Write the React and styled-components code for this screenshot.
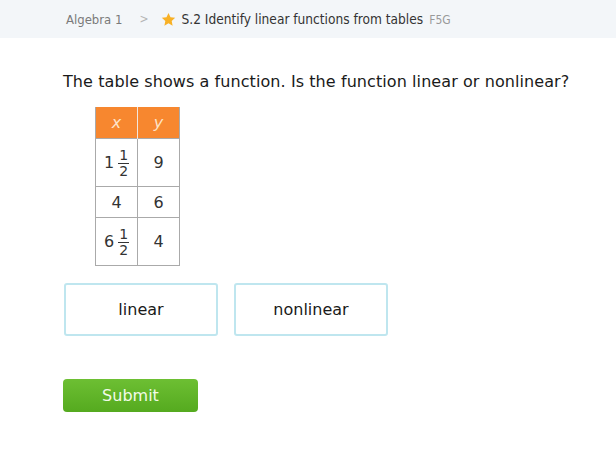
import styled, { createGlobalStyle } from 'styled-components';

const GlobalStyle = createGlobalStyle`
  body {
    margin: 0;
    background: #ffffff;
    font-family: "DejaVu Sans", Verdana, sans-serif;
    color: #222;
  }
`;

const Breadcrumb = styled.div`
  align-items: center;
  background-color: #f3f6f9;
  display: flex;
  height: 38px;
  padding-left: 66px;
  font-family: "DejaVu Sans Condensed", "DejaVu Sans", sans-serif;
  font-size: 13px;
`;

const Crumb = styled.span`
  color: #7a7a7a;
`;

const Chevron = styled.span`
  color: #b5b5b5;
  margin: 0 13px 0 17px;
  font-size: 12px;
`;

const Skill = styled.span`
  color: #333;
  margin-left: 5px;
  font-size: 13.6px;
`;

const Code = styled.span`
  color: #999;
  font-size: 12px;
  margin-left: 6px;
  margin-top: 2px;
`;

const Main = styled.div`
  padding: 34px 0 0 63px;
`;

const Question = styled.p`
  font-size: 16px;
  letter-spacing: 0.08px;
  margin: 0 0 16px;
  color: #1a1a1a;
`;

const Table = styled.table`
  border-collapse: collapse;
  margin-left: 32px;
  font-size: 16px;
`;

const Head = styled.th`
  background-color: #f7872f;
  color: #fde3c8;
  font-style: italic;
  font-weight: normal;
  height: 31px;
  width: 41px;
  padding: 0;
  border-left: 1px solid #f2e6dc;
  &:first-child {
    border-left: 1px solid #aaa;
  }
  &:last-child {
    border-right: 1px solid #aaa;
  }
`;

const Cell = styled.td`
  border: 1px solid #aaa;
  height: ${p => (p.$tall ? 47 : 30)}px;
  padding: 0;
  text-align: center;
  color: #333;
`;

const Mixed = styled.span`
  align-items: center;
  display: inline-flex;
  gap: 4px;
`;

const Frac = styled.span`
  display: inline-flex;
  flex-direction: column;
  align-items: center;
  font-size: 14px;
  line-height: 14px;
`;

const Num = styled.span`
  border-bottom: 1px solid #333;
  padding: 0 1px 1px;
`;

const Choices = styled.div`
  display: flex;
  gap: 16px;
  margin-top: 17px;
  margin-left: 1px;
`;

const Choice = styled.button`
  background: #fff;
  border: 2px solid #bfe6ef;
  border-radius: 3px;
  color: #1a1a1a;
  font-family: "DejaVu Sans", Verdana, sans-serif;
  font-size: 16px;
  height: 53px;
  width: 154px;
  cursor: pointer;
`;

const Submit = styled.button`
  display: block;
  background: linear-gradient(#6dbf33, #55aa1f);
  border: none;
  border-radius: 4px;
  color: #f2fbe9;
  font-family: "DejaVu Sans", Verdana, sans-serif;
  font-size: 16px;
  height: 33px;
  width: 135px;
  margin-top: 43px;
`;

const Star = () => (
  <svg width="15" height="15" viewBox="0 0 24 24">
    <path
      d="M12 1.5l3.2 6.9 7.5.9-5.6 5.1 1.5 7.4L12 18l-6.6 3.8 1.5-7.4-5.6-5.1 7.5-.9z"
      fill="#f8b126"
    />
  </svg>
);

const MixedNumber = ({ whole, n, d }) => (
  <Mixed>
    {whole}
    <Frac>
      <Num>{n}</Num>
      <span>{d}</span>
    </Frac>
  </Mixed>
);

const rows = [
  { x: <MixedNumber whole="1" n="1" d="2" />, y: '9', tall: true },
  { x: '4', y: '6', tall: false },
  { x: <MixedNumber whole="6" n="1" d="2" />, y: '4', tall: true },
];

export default function App() {
  return (
    <>
      <GlobalStyle />
      <Breadcrumb>
        <Crumb>Algebra 1</Crumb>
        <Chevron>&gt;</Chevron>
        <Star />
        <Skill>S.2 Identify linear functions from tables</Skill>
        <Code>F5G</Code>
      </Breadcrumb>
      <Main>
        <Question>The table shows a function. Is the function linear or nonlinear?</Question>
        <Table>
          <thead>
            <tr>
              <Head>x</Head>
              <Head>y</Head>
            </tr>
          </thead>
          <tbody>
            {rows.map((r, i) => (
              <tr key={i}>
                <Cell $tall={r.tall}>{r.x}</Cell>
                <Cell $tall={r.tall}>{r.y}</Cell>
              </tr>
            ))}
          </tbody>
        </Table>
        <Choices>
          <Choice>linear</Choice>
          <Choice>nonlinear</Choice>
        </Choices>
        <Submit>Submit</Submit>
      </Main>
    </>
  );
}
